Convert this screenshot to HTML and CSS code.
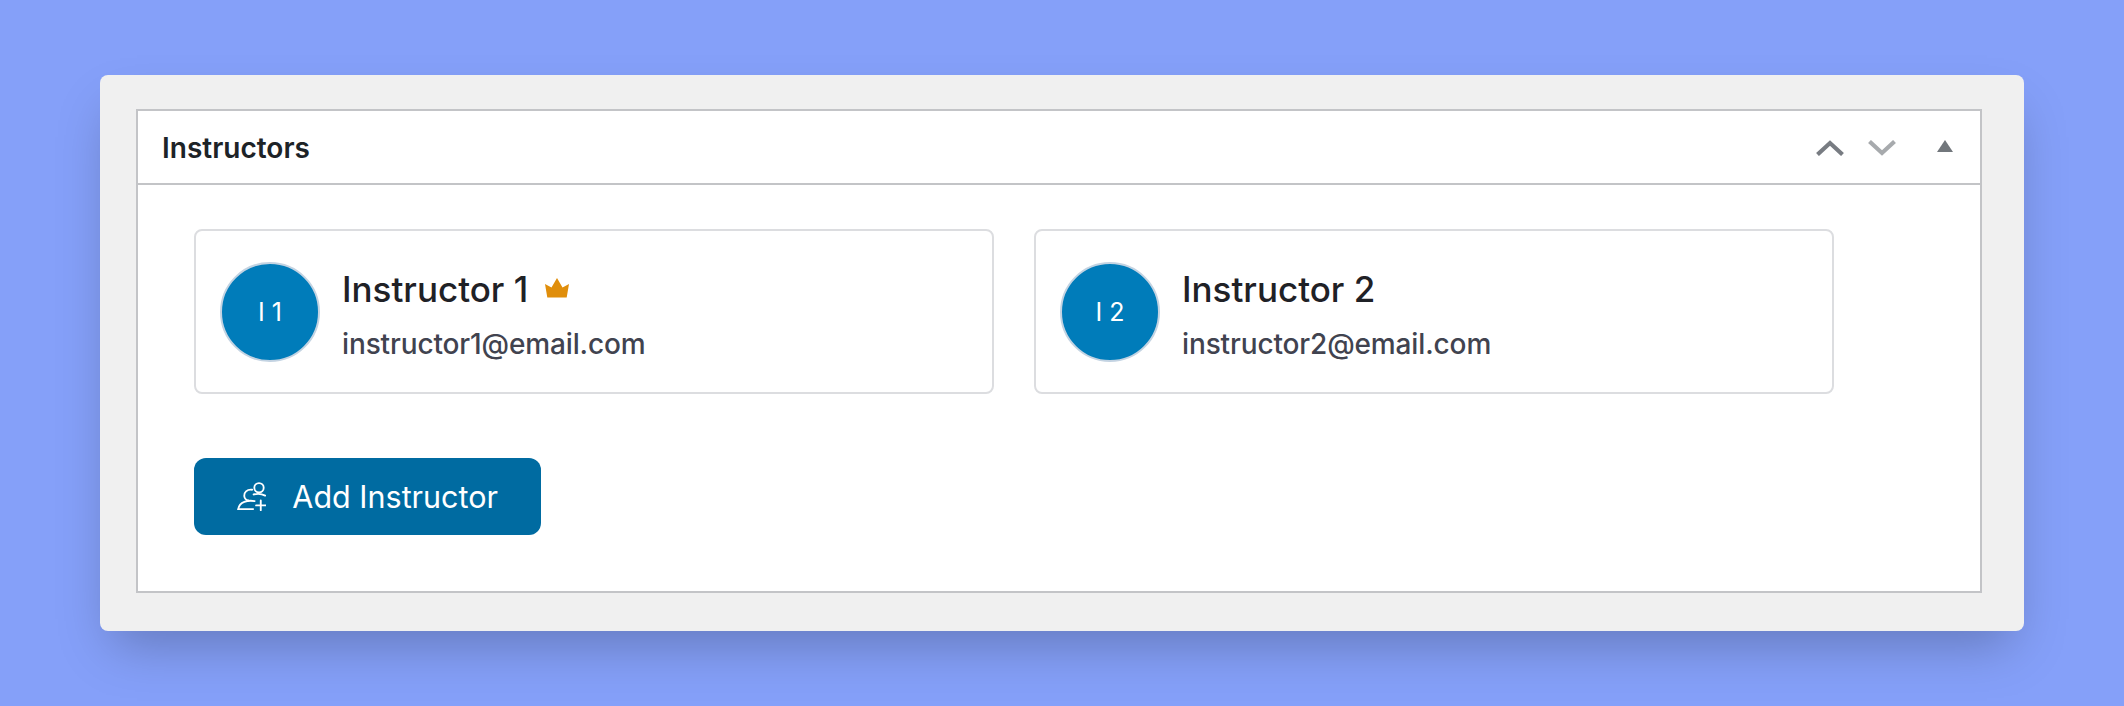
FILE: index.html
```html
<!DOCTYPE html>
<html lang="en">
  <head>
    <meta charset="UTF-8" />
    <meta name="viewport" content="width=device-width, initial-scale=1.0" />
    <title>Instructors</title>
    <link rel="stylesheet" href="styles.css">
  </head>
  <body>
    <div class="screen">
      <div class="metabox">
        <div class="metabox-head">
          <h2 class="metabox-title">Instructors</h2>
          <div class="metabox-actions">
            <svg class="arrow" width="28" height="16" viewBox="0 0 28 16"><path d="M1.5 14.5 L14 3 L26.5 14.5" fill="none" stroke="#787c82" stroke-width="4.2"/></svg>
            <svg class="arrow" width="28" height="16" viewBox="0 0 28 16"><path d="M1.5 1.5 L14 13 L26.5 1.5" fill="none" stroke="#a7aaad" stroke-width="4.2"/></svg>
            <svg class="toggle" width="16" height="12" viewBox="0 0 16 12"><path d="M8 0 L16 12 L0 12 Z" fill="#72777c"/></svg>
          </div>
        </div>
        <div class="metabox-body">
          <div class="cards">
            <div class="card">
              <div class="avatar">I 1</div>
              <div class="info">
                <div class="name">Instructor 1
                  <svg class="crown" width="24" height="20" viewBox="0 0 24 20"><path d="M12 0 L17.5 9.5 L24 6 L21.7 19.6 L2.3 19.6 L0 6 L6.5 9.5 Z" fill="#e08e0b"/></svg>
                </div>
                <div class="email">instructor1@email.com</div>
              </div>
            </div>
            <div class="card">
              <div class="avatar">I 2</div>
              <div class="info">
                <div class="name">Instructor 2</div>
                <div class="email">instructor2@email.com</div>
              </div>
            </div>
          </div>
          <button class="add-btn">
            <svg width="30" height="29" viewBox="0 0 30 29" fill="none" stroke="#fff" stroke-width="1.9" stroke-linecap="round">
              <circle cx="22.5" cy="5.6" r="4.8"/>
              <path d="M15.5 7.6 C10 7 7 10.5 7.4 14 C7.7 16.4 9.4 18.2 11.6 18.6"/>
              <path d="M17 12.4 C20 11.6 25.5 11.8 28.8 13.6"/>
              <path d="M18 19.2 C11 18 2.6 19.8 1.2 27.4 L16.5 27.4"/>
              <path d="M24.3 18.6 V28.5 M19.5 23.6 H29.2"/>
            </svg>
            Add Instructor
          </button>
        </div>
      </div>
    </div>
  </body>
</html>
```

FILE: styles.css
```css
body {
  margin: 0;
  height: 706px;
  overflow: hidden;
  background-color: #85a0f9;
  font-family: Inter, "Liberation Sans", sans-serif;
  padding: 75px 100px 0;
  box-sizing: border-box;
}
.screen {
  height: 556px;
  box-sizing: border-box;
  padding: 34px 42px 38px 36px;
  background-color: #f0f0f0;
  border-radius: 8px;
  box-shadow: 0 25px 50px -12px rgba(0, 0, 0, 0.25);
}
.metabox {
  height: 100%;
  box-sizing: border-box;
  background-color: #fff;
  border: 2px solid #c3c4c7;
}
.metabox-head {
  height: 72px;
  box-sizing: content-box;
  display: flex;
  justify-content: space-between;
  align-items: center;
  padding: 0 27px 0 24px;
  border-bottom: 2px solid #c3c4c7;
}
.metabox-title {
  margin: 2px 0 0;
  font-size: 28px;
  font-weight: 600;
  color: #1d2327;
}
.metabox-actions {
  display: flex;
  align-items: center;
  gap: 24px;
  margin-top: 2px;
}
.toggle {
  margin-left: 17px;
  margin-bottom: 4px;
}
.metabox-body {
  padding: 44px 56px;
}
.cards {
  display: flex;
  gap: 40px;
}
.card {
  width: 800px;
  height: 165px;
  box-sizing: border-box;
  display: flex;
  align-items: center;
  gap: 22px;
  padding: 0 24px;
  border: 2px solid #dcdde0;
  border-radius: 8px;
}
.avatar {
  width: 100px;
  height: 100px;
  box-sizing: border-box;
  display: flex;
  justify-content: center;
  align-items: center;
  flex-shrink: 0;
  border: 2px solid #c3d3e2;
  border-radius: 50%;
  background-color: #007cba;
  color: #fff;
  font-size: 25px;
  font-weight: 400;
}
.info {
  padding-top: 4px;
}
.name {
  display: flex;
  align-items: center;
  gap: 17px;
  font-size: 35px;
  font-weight: 500;
  line-height: 42px;
  color: #1f2126;
}
.crown {
  margin-bottom: 2px;
}
.email {
  margin-top: 18px;
  font-size: 28px;
  letter-spacing: -0.13px;
  font-weight: 500;
  line-height: 32px;
  color: #41434f;
}
.add-btn {
  width: 347px;
  height: 77px;
  margin-top: 64px;
  display: flex;
  align-items: center;
  gap: 26px;
  padding: 0 43px;
  border: 0;
  border-radius: 12px;
  background-color: #006ba1;
  color: #fff;
  font-family: inherit;
  font-size: 30.5px;
  font-weight: 400;
  white-space: nowrap;
}
```
